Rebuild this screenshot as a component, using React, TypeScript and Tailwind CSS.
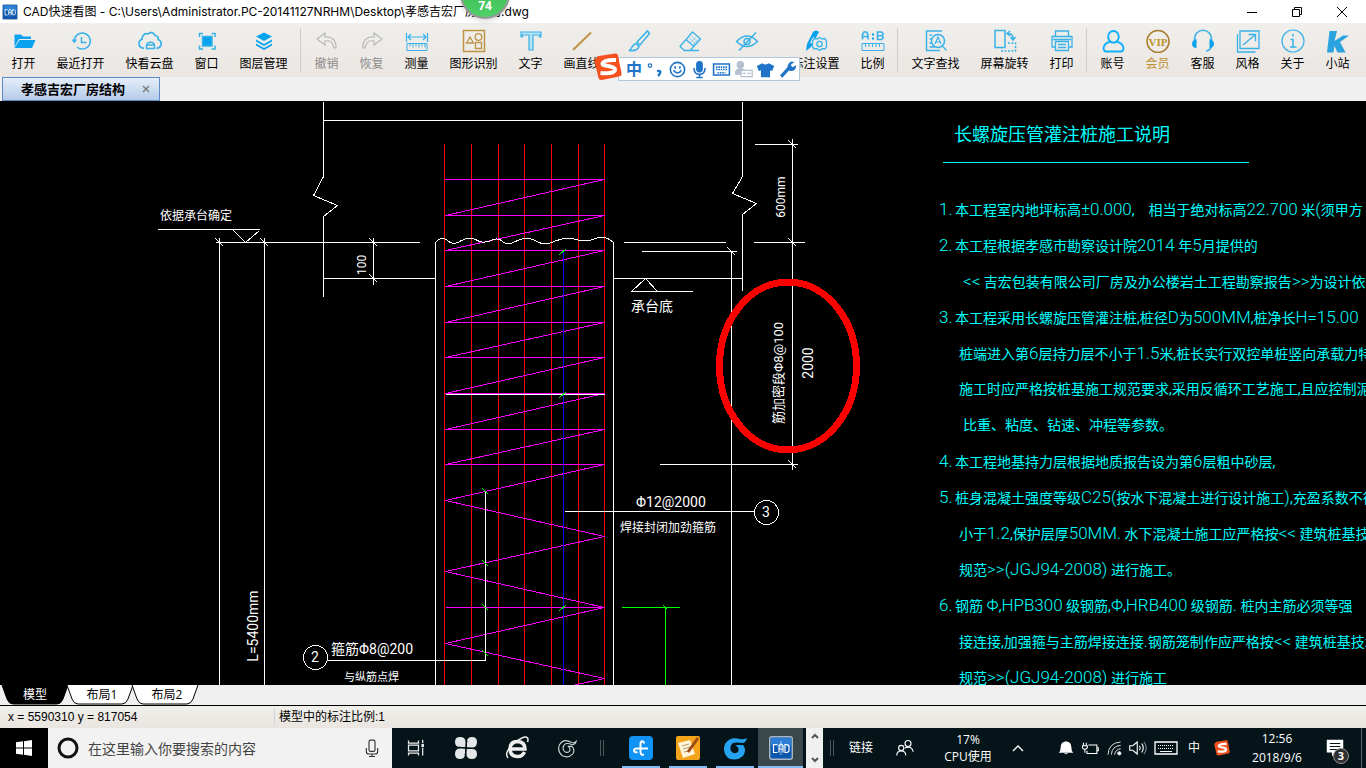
import type { ReactNode } from 'react';
import clsx from 'clsx';

const BLUE = '#0aa2ee';
const SKY = '#38b2e8';
const GOLD = '#bd9544';
const GRAY = '#b9b9b9';

type IconProps = { color?: string; children: ReactNode; className?: string };

function Icon({ color = SKY, children, className = 'size-6' }: IconProps) {
    return (
        <svg viewBox="0 0 24 24" fill="none" stroke={color} strokeWidth="1.5" className={className} aria-hidden="true">
            {children}
        </svg>
    );
}

function CadLogo({ className }: { className: string }) {
    return (
        <svg viewBox="0 0 24 24" fill="none" className={className} aria-hidden="true">
            <rect x="0.7" y="0.7" width="22.6" height="22.6" rx="2" fill="#0d57ae" stroke="#a9b6c4" strokeWidth="1.4" />
            <path d="M2 2h20v8Q12 13 2 9z" fill="#2b7ed4" />
            <path d="M8.5 8.5h-4v8h4M10 16.500v-7l2-1.500 2 1.500v7M10 13h4M16 8.500v8h2.500l1.500-1.500v-5l-1.500-1.500z" stroke="#fff" strokeWidth="1.200" />
            <path d="M12 5v14" stroke="#cfe4ff" strokeWidth="0.700" />
        </svg>
    );
}

function SogouLogo({ className }: { className: string }) {
    return (
        <svg viewBox="0 0 28 28" fill="none" className={className} aria-hidden="true">
            <path d="M3 5Q2 3 5 3L21 0.500Q23.500 0 24 2.500L27.500 20Q28 23 25 23.500L8 27Q5 27.500 4.500 25L0.500 8Q0 6 3 5z" fill="#f4511e" />
            <path d="M22 7Q10 6.500 8.500 10.500C8 14 21.500 12 21 17C20.500 20.500 12 20.500 6.500 20" stroke="#fff" strokeWidth="4" />
        </svg>
    );
}

const toolGroups = [
    [
        {
            label: '打开', width: 'w-[45px]',
            icon: <Icon color={BLUE}><path d="M2.500 18V5.500h6.500l2 2h8V10H7z" fill={BLUE} stroke="none" /><path d="M7.500 11H23.500l-3.500 8H2.500z" fill={BLUE} stroke="none" /></Icon>,
        },
        {
            label: '最近打开', width: 'w-[69px]',
            icon: <Icon><path d="M5.300 12a8 8 0 1 1 2.700 6" /><path d="M2.500 10.500h5.600l-2.800 4z" fill={SKY} stroke="none" /><path d="M12.500 8v5.500h5" /></Icon>,
        },
        {
            label: '快看云盘', width: 'w-[69px]',
            icon: <Icon><path d="M6 19.300C2.500 19 1 17 1 14.500c0-2 1-3.500 3-4.200C4 6 7 4 10 5c2-2.500 6-1.500 7 1.500 2.500 0 3.500 2 3.200 4 2.300.8 3 2.500 3 4 0 3-2 4.500-4.700 4.800" strokeWidth="1.700" /><path d="M8.500 19.500v-2.500c0-5 8-5 8 0v2.500zM9 16h7" /></Icon>,
        },
        {
            label: '窗口', width: 'w-[45px]',
            icon: <Icon><path d="M7.500 7.500h9.500v9.500H7.500z" fill={BLUE} /><path d="M4.500 8V4.500H8M16.500 4.500H20V8M20 16.500V20h-3.500M8 20H4.500v-3.500" /></Icon>,
        },
        {
            label: '图层管理', width: 'w-[69px]',
            icon: <Icon><path d="M12 3.500l8 4-8 4.500-8-4.500zM4 10.500l8 4.500 8-4.500v2l-8 4.500-8-4.500zM4 14.500l8 4.500 8-4.500v2L12 21l-8-4.500z" fill={BLUE} stroke="none" /></Icon>,
        },
    ],
    [
        {
            label: '撤销', width: 'w-[45px]', muted: true,
            icon: <Icon color={GRAY}><path d="M10 4L2 10l8 6v-4c5-1 8 1 9 7h2C21.500 11 17 7.500 10 8z" strokeWidth="1.200" /></Icon>,
        },
        {
            label: '恢复', width: 'w-[45px]', muted: true,
            icon: <Icon color={GRAY}><path d="M14 4l8 6-8 6v-4c-5-1-8 1-9 7H3C2.500 11 7 7.500 14 8z" strokeWidth="1.200" /></Icon>,
        },
        {
            label: '测量', width: 'w-[45px]',
            icon: <Icon><path d="M1.500 4v9M22.500 4v9M3 8h18M6 5L3 8l3 3M18 5l3 3-3 3" strokeWidth="1.200" /><path d="M2 14.500h20v7H2zM5 14.500v3M8 14.500v4M11 14.500v3M14 14.500v4M17 14.500v3M20 14.500v4" strokeWidth="1" /></Icon>,
        },
        {
            label: '图形识别', width: 'w-[69px]',
            icon: <Icon color={GOLD}><path d="M1.500 1.500h21v21h-21z" /><path d="M8 8l3.500 6h-7zM13.500 13.500h6v6h-6z" strokeWidth="1.300" /><circle cx="16.500" cy="8" r="3.300" strokeWidth="1.300" /></Icon>,
        },
        {
            label: '文字', width: 'w-[45px]',
            icon: <Icon><path d="M2 3h20v5h-1.500V6H14v15h-4V6H3.500v2H2z" strokeWidth="1.200" fill="#b8e2f5" /></Icon>,
        },
        { label: '画直线', width: 'w-[57px]', icon: <Icon color={GOLD}><path d="M3 21L21 3.500" strokeWidth="2" /></Icon> },
        {
            label: '涂鸦线', width: 'w-[57px]', unlabelled: true,
            icon: <Icon><path d="M20.500 2l2 2.500L13 16l-3-3zM9 14.500l3 3c-1 3.500-5 4.500-10 4 3-1 3-6.500 7-7z" /></Icon>,
        },
        {
            label: '删除', width: 'w-[45px]', unlabelled: true,
            icon: <Icon><path d="M14.500 3l8 7L12 21.500H6.500L2 17.500zM8 10.500l8 7M6 21.500h15" strokeWidth="1.300" /><path d="M11 8.500l7 7M13 6.500l7 7M18 8l-6 6M20 10l-5 6" strokeWidth="0.500" /></Icon>,
        },
        {
            label: '隐藏标注', width: 'w-[69px]', unlabelled: true,
            icon: <Icon><path d="M1.500 12.500Q12 1.500 22.500 12.500Q12 22.500 1.500 12.500z" /><circle cx="12" cy="12.500" r="3" /><path d="M21 3.500L4 21.500" /></Icon>,
        },
        {
            label: '标注设置', width: 'w-[69px]',
            icon: <Icon><path d="M9 3q3-3 6 0L7 18l-5 4 1-7z" fill={BLUE} stroke="none" /><path d="M9 8l4 2-3 5-4-1z" fill="#eeecea" stroke="none" /><path d="M15.500 8.500l2.500 1.500 3-.5 1.500 3v5l-1.500 2.500-3-.3-2.500 1.800-2.500-1.800-3 .3L8.500 17.500v-5l1.500-3 3 .5z" strokeWidth="1.300" fill="#eeecea" /><circle cx="15.500" cy="15" r="2.700" strokeWidth="1.300" /></Icon>,
        },
        {
            label: '比例', width: 'w-[45px]',
            icon: <Icon><path d="M1.500 10.500V5.500L3 3h2.500L7 5.500v5M1.500 7.500H7M16.500 3v7.500h4l1.500-1.500V7.500l-1-1 1-1V4.500L20.500 3zM16.500 6.700H21" strokeWidth="1.600" /><path d="M11 4.500h2v2h-2zM11 8.500h2v2h-2z" fill={BLUE} stroke="none" /><path d="M1 14.500h22v7H1zM4.500 14.500v3.500M8 14.500v3.500M11.500 14.500v3.500M15 14.500v3.500M18.500 14.500v3.500" strokeWidth="1" /></Icon>,
        },
    ],
    [
        {
            label: '文字查找', width: 'w-[69px]',
            icon: <Icon><path d="M16 21.500H2.500V2H18M5.500 6H8M5.500 10h2M5.500 14h2M5.500 18h5" /><circle cx="14" cy="12" r="6.500" /><path d="M11 15l3-7 3 7M12 13h4M18.500 17l4 4.500" strokeWidth="1.200" /></Icon>,
        },
        {
            label: '屏幕旋转', width: 'w-[69px]',
            icon: <Icon><path d="M2 1.500h10v17H2z" /><path d="M15 14h7.500v8H9v-3" strokeDasharray="2 1.500" /><path d="M15 4.500q5 0 5 5M17 2l-3 2.500L17 7M17.500 8l2.500 3 2.500-3" /></Icon>,
        },
        {
            label: '打印', width: 'w-[45px]',
            icon: <Icon><path d="M5.500 7V2h13v5M5 18H2V7.500h20V18h-3M5.500 12.500h13v9h-13zM8 15.500h8M8 18.500h8M3 10.500h18" strokeWidth="1.300" /></Icon>,
        },
    ],
    [
        {
            label: '账号', width: 'w-[45px]',
            icon: <Icon color="#12b0fa"><path d="M12.500 2a5.300 5.800 0 1 1-.1 0zM9.500 12.500C1.500 14.500 1 22 5 22.500H20c4-.5 3.500-8-4.500-10" strokeWidth="1.900" /></Icon>,
        },
        {
            label: '会员', width: 'w-[45px]', gold: true,
            icon: (
                <Icon color="#a87c2c">
                    <circle cx="12" cy="12.500" r="11" />
                    <text x="12" y="16.500" textAnchor="middle" fontFamily="Liberation Serif, serif" fontWeight="700" fontSize="11" fill="#c09228" stroke="none">VIP</text>
                </Icon>
            ),
        },
        {
            label: '客服', width: 'w-[45px]',
            icon: <Icon><path d="M3.500 11C3 -2 21 -2 20.500 11M20.500 17q-1 4.500-5.500 5" /><path d="M5.500 10v9C-.5 19-.5 11 5.500 10zM18.500 10v9C24.500 19 24.500 11 18.500 10z" fill={BLUE} stroke="none" /></Icon>,
        },
        {
            label: '风格', width: 'w-[45px]',
            icon: <Icon><path d="M4 2h19v17.500H4zM1.500 5v18h18M7 16L19.500 5.500M12.500 5.500h7v7" strokeWidth="1.300" /></Icon>,
        },
        {
            label: '关于', width: 'w-[45px]',
            icon: <Icon><circle cx="12" cy="12" r="11" strokeWidth="1.200" /><path d="M12 5v2.500M9.500 10.500H12V18M9 18h6.500" /></Icon>,
        },
        {
            label: '小站', width: 'w-[45px]',
            icon: <Icon><path d="M3.500 2H11L8.500 12 17 6.500h6L14 13l5.500 10.500h-8L8.500 17 7.500 23.500H1z" fill="#2aa3df" stroke="none" /></Icon>,
        },
    ],
];

function TitleBar() {
    return (
        <header className="flex h-[23px] items-center bg-white">
            <CadLogo className="ml-[2px] size-4" />
            <h1 className="ml-[5px] font-['Inter','Noto_Sans_CJK_SC',sans-serif] text-[12px] whitespace-nowrap text-black">
                CAD快速看图 - C:\Users\Administrator.PC-20141127NRHM\Desktop\孝感吉宏厂房结构.dwg
            </h1>
            <div className="mr-[2px] ml-auto flex">
                <button aria-label="最小化" className="flex h-5 w-[45px] items-center justify-center">
                    <svg className="size-3" stroke="#000"><path d="M1 6.500h10" /></svg>
                </button>
                <button aria-label="还原" className="flex h-5 w-[45px] items-center justify-center">
                    <svg className="size-3" stroke="#000" fill="none"><path d="M1.500 3.500h7v7h-7zM3.500 3.500v-2h7v7h-2" /></svg>
                </button>
                <button aria-label="关闭" className="flex h-5 w-[45px] items-center justify-center">
                    <svg className="size-3" stroke="#000"><path d="M1 1l10 10M11 1L1 11" /></svg>
                </button>
            </div>
        </header>
    );
}

function Toolbar() {
    return (
        <nav className="flex h-[54px] bg-linear-to-b from-[#f0efec] to-[#ebe6e2] pl-px">
            {toolGroups.map((group, index) => (
                <div key={index} className="flex">
                    {index > 0 && <div className="mt-[5px] mr-[3px] ml-[2px] h-11 w-px bg-[#cfcdca]" />}
                    {group.map((tool: any) => (
                        <button
                            key={tool.label}
                            aria-label={tool.unlabelled ? tool.label : undefined}
                            className={clsx(
                                'flex flex-col items-center pt-[6px] text-[12px] leading-4 whitespace-nowrap',
                                tool.width,
                                tool.muted ? 'text-[#8c8c8c]' : tool.gold ? 'text-[#bd8f2e]' : 'text-black',
                            )}
                        >
                            {tool.icon}
                            {!tool.unlabelled && <span className="mt-[3px]">{tool.label}</span>}
                        </button>
                    ))}
                </div>
            ))}
        </nav>
    );
}

function ImeBar() {
    return (
        <div className="absolute top-[57px] left-[618px] flex h-6 w-[182px] items-center border border-[#b4c7da] bg-white text-[#1f74c8]">
            <SogouLogo className="-mt-1 -ml-[25px] size-7 shrink-0" />
            <button className="ml-[3px] w-[18px] text-[16px] leading-5 font-bold">中</button>
            <div className="ml-[3px] flex gap-[3px]">
                <Icon color="#1f74c8" className="size-[19px]"><circle cx="5" cy="7" r="2.200" /><path d="M14 14q5-1 4 2-1 3-3 4" strokeWidth="3" /></Icon>
                <Icon color="#1f74c8" className="size-[19px]"><circle cx="12" cy="12" r="9" strokeWidth="2" /><path d="M7 13q5 7 10 0M9 8v3M15 8v3" strokeWidth="2" /></Icon>
                <Icon color="#1f74c8" className="size-[19px]"><rect x="8.500" y="2" width="7" height="13" rx="3.500" fill="#1f74c8" /><path d="M5 10q0 8 7 8t7-8M12 18v4M8 22h8" strokeWidth="2" /></Icon>
                <Icon color="#1f74c8" className="size-[19px]"><path d="M2 5h20v14H2z" strokeWidth="2" /><path d="M5 9h14M5 12h14M7 16h10" strokeWidth="2" strokeDasharray="2 1" /></Icon>
                <Icon color="#b5bfd0" className="size-[19px]"><circle cx="8" cy="6" r="4" fill="#b5bfd0" /><path d="M2 18q0-7 6-7t6 7z" fill="#b5bfd0" /><path d="M9 13h14v8H9z" fill="#fff" /><path d="M11 17h4M17 17h4" /></Icon>
                <Icon color="#1f74c8" className="size-[19px]"><path d="M8 5q4 3 8 0l6 3-2 5-3-1v9H7v-9l-3 1-2-5z" fill="#1f74c8" /></Icon>
                <Icon color="#1f74c8" className="size-[19px]"><path d="M4 21l10-11" strokeWidth="4" /><path d="M19 3l-4 3 3 4 4-2q-1 6-7 5-5-5 1-10z" fill="#1f74c8" /></Icon>
            </div>
        </div>
    );
}

const barRows = [179, 215, 250, 286, 322, 357, 393, 429, 464];
const zigzag = [464, 500, 536, 571, 607, 643, 678];
const dimTicks = [[219, 242], [264, 242], [373, 242], [373, 278], [731, 251], [792, 144], [792, 242], [792, 464]];
const weldTicks = [[563, 251], [563, 394], [563, 607]];
const stirrupTicks = [[485, 491], [485, 563], [485, 607], [485, 653]];

function PileDrawing() {
    return (
        <svg className="absolute inset-0 size-full" fill="none" shapeRendering="crispEdges">
            <g transform="translate(0 -101)" strokeWidth="1">
                <g stroke="#fff" transform="translate(0.5 0.5)">
                    <path d="M323 101V176L313 195 337 205 323 216V296" />
                    <path d="M742 101V176L732 193 756 203 742 214V290" />
                    <path d="M323 120H742M157 229H259M233 230L245 242 259 230M215 242H419M323 278H435" />
                    <path d="M219 237V685M264 237V685M373 237V284" />
                    <path d="M623 242H725M641 251H736M613 278H742M731 251V685" />
                    <path d="M631 291L645 278 657 291M631 291H692" />
                    <path d="M792 138V469M754 144H797M753 242H804M659 464H797" />
                    {dimTicks.map(([x, y]) => <path key={`${x}-${y}`} d={`M${x - 4} ${y - 4}L${x + 4} ${y + 4}`} />)}
                </g>
                <path d="M444.500 144V685M471.500 144V685M498.500 144V685M524.500 144V685M551.500 144V685M578.500 144V685M604.500 144V685" stroke="#f00" />
                <g stroke="#f0f" transform="translate(0.5 0.5)">
                    {barRows.map((y) => <path key={y} d={`M444 ${y}H604`} />)}
                    {barRows.slice(1).map((y, i) => <path key={y} d={`M604 ${barRows[i]}L445 ${y}`} />)}
                    <path d={`M${zigzag.map((y, i) => `${i % 2 ? 445 : 604} ${y}`).join('L')}L572 685`} />
                    <path d="M445 607H604" />
                </g>
                <g stroke="#fff" transform="translate(0.5 0.5)">
                    <path d="M435 685V242Q441 235 447 240Q453 246 461 240Q470 235 479 241Q486 243 493 239Q499 237 503 242Q509 245 517 240Q528 235 538 242Q547 245 556 240Q568 236 579 240Q589 241 595 238Q604 234 613 242V685" />
                    <path d="M445 394H604M485 490V660H327M564 511H754" />
                    <circle cx="766" cy="512" r="12" />
                    <circle cx="315" cy="657" r="12" />
                </g>
                <path d="M563.500 251V685" stroke="#00f" />
                <g stroke="#0f0" transform="translate(0.5 0.5)">
                    {weldTicks.map(([x, y]) => <path key={y} d={`M${x - 4} ${y + 3}L${x + 3} ${y - 3}`} />)}
                    {stirrupTicks.map(([x, y]) => <path key={y} d={`M${x - 3} ${y - 3}L${x + 3} ${y + 3}`} />)}
                    <path d="M621 607H679M665 607V685M663 605L667 609" />
                </g>
                <g fill="#fff" fontSize="14">
                    <text x="160" y="220" fontSize="12">依据承台确定</text>
                    <text x="631" y="311">承台底</text>
                    <text x="636" y="507">Φ12@2000</text>
                    <text x="620" y="532" fontSize="12">焊接封闭加劲箍筋</text>
                    <text x="331" y="654">箍筋Φ8@200</text>
                    <text x="344" y="681" fontSize="11">与纵筋点焊</text>
                    <text x="762" y="517">3</text>
                    <text x="311" y="662">2</text>
                    <g textAnchor="middle">
                        <text transform="translate(366 265) rotate(-90)" fontSize="12">100</text>
                        <text transform="translate(258 626) rotate(-90)">L=5400mm</text>
                        <text transform="translate(785 197) rotate(-90)" fontSize="12">600mm</text>
                        <text transform="translate(783 373) rotate(-90)" fontSize="13">筋加密段Φ8@100</text>
                        <text transform="translate(813 363) rotate(-90)">2000</text>
                    </g>
                </g>
                <ellipse cx="788" cy="366" rx="68.500" ry="84" stroke="#f00" strokeWidth="7" />
            </g>
        </svg>
    );
}

const notes = [
    { no: '1.', text: '本工程室内地坪标高±0.000,\u3000相当于绝对标高22.700 米(须甲方' },
    { no: '2.', text: '本工程根据孝感市勘察设计院2014 年5月提供的' },
    { text: '<< 吉宏包装有限公司厂房及办公楼岩土工程勘察报告>>为设计依', indent: 'pl-2' },
    { no: '3.', text: '本工程采用长螺旋压管灌注桩,桩径D为500MM,桩净长H=15.00' },
    { text: '桩端进入第6层持力层不小于1.5米,桩长实行双控单桩竖向承载力特', indent: 'pl-1' },
    { text: '施工时应严格按桩基施工规范要求,采用反循环工艺施工,且应控制泥', indent: 'pl-1' },
    { text: '比重、粘度、钻速、冲程等参数。', indent: 'pl-2' },
    { no: '4.', text: '本工程地基持力层根据地质报告设为第6层粗中砂层,' },
    { no: '5.', text: '桩身混凝土强度等级C25(按水下混凝土进行设计施工),充盈系数不得' },
    { text: '小于1.2,保护层厚50MM. 水下混凝土施工应严格按<< 建筑桩基技', indent: 'pl-1' },
    { text: '规范>>(JGJ94-2008) 进行施工。', indent: 'pl-1' },
    { no: '6.', text: '钢筋 Φ,HPB300 级钢筋,Φ,HRB400 级钢筋. 桩内主筋必须等强' },
    { text: '接连接,加强箍与主筋焊接连接.钢筋笼制作应严格按<< 建筑桩基技术', indent: 'pl-1' },
    { text: '规范>>(JGJ94-2008) 进行施工', indent: 'pl-1' },
];

// latin runs use a taller face than the hanzi around them
function NoteText({ text }: { text: string }) {
    return text.split(/([A-Z0-9.Φ±=()<>-]+)/).map((part, i) => (
        i % 2 ? <span key={i} className="text-[17px] font-light">{part}</span> : part
    ));
}

function ConstructionNotes() {
    return (
        <section className="absolute top-[16px] left-[939px] whitespace-nowrap text-[#00ffff]">
            <h2 className="ml-[15px] h-9 text-[18px] leading-9">长螺旋压管灌注桩施工说明</h2>
            <div className="mt-[9px] ml-1 h-px w-[306px] bg-[#00ffff]" />
            <ol className="mt-[28px] text-[14px]">
                {notes.map((note, i) => (
                    <li key={i} className="flex h-9 items-center leading-9">
                        <span className="w-4 shrink-0 text-[17px] font-light">{note.no}</span>
                        <span className={note.indent}><NoteText text={note.text} /></span>
                    </li>
                ))}
            </ol>
        </section>
    );
}

const layoutTabs = ['模型', '布局1', '布局2'];

function LayoutTabs() {
    return (
        <div className="flex h-[21px] border-b border-black bg-[#f0f0f0]">
            {layoutTabs.map((name, i) => (
                <button key={name} className={clsx('relative h-5 w-[68px] text-[12px]', i === 0 ? 'ml-px text-white' : '-ml-[3px] pl-1 text-black')}>
                    <svg className="absolute inset-0 size-full" aria-hidden="true">
                        <path d="M1 0L6 14Q8 19 12 19H56Q60 19 62 14L67 0" fill={i === 0 ? '#000' : '#fff'} stroke="#000" />
                    </svg>
                    <span className="relative">{name}</span>
                </button>
            ))}
        </div>
    );
}

const pinned = [
    {
        name: '任务视图', width: 'w-12',
        icon: <Icon color="#eee" className="size-5"><path d="M3 3v3h12V3M3 21v-3h12v3M3 8.500h12v7H3zM20 2v4M20 12v9" /><path d="M18.500 7h3v4h-3z" fill="#eee" stroke="none" /></Icon>,
    },
    {
        name: '搜狗浏览', width: 'w-[51px]',
        icon: (
            <Icon color="none" className="size-6">
                <path d="M11.500 11H6Q1 11 1 6T6 1Q11.500 1 11.500 6zM13 11.500V6Q13 1 18 1T23 6Q23 11.500 18 11.500zM12.500 13H18Q23 13 23 18T18 23Q12.500 23 12.500 18zM11 12.500V18Q11 23 6 23T1 18Q1 12.500 6 12.500z" fill="#e4e7e8" />
                <path d="M5 11Q9 12 12 12Q12 8 13 5M19 12.500Q15 12 12 12Q12 16 11 19" stroke="#041419" strokeWidth="1" />
            </Icon>
        ),
    },
    {
        name: 'Internet Explorer', width: 'w-[52px]',
        icon: <Icon color="#eee" className="size-6"><path d="M19.500 16Q17 21 12 20.500 5 20 5 13 5 5.500 12.500 5.500 20 6 20 13H6" strokeWidth="3.500" /><path d="M3 22Q-2 16 11 6 20-1 22.500 2q1 1.500 0 4" /></Icon>,
    },
    {
        name: '广联达', width: 'w-12',
        icon: (
            <Icon color="#cfd6d8" className="size-5">
                <path d="M23 4Q20 7 17 5Q8 0 3 8Q0 16 6 21Q13 25 19 19Q22 14 18 10H13Q17 12 15 16Q11 19 8 15Q6 10 10 7Q14 6 18 8Q22 8 23 4z" strokeWidth="1.300" />
            </Icon>
        ),
    },
];

const running = [
    {
        name: '快看',
        icon: (
            <Icon color="#fff" className="size-6">
                <rect width="24" height="24" rx="4" fill="#1193f5" stroke="none" />
                <path d="M15 7.500Q14.500 4.500 12.500 5.500Q11.500 6 11.500 8V16Q11.500 19.500 15 18.500M19 12.500H8Q5 12.500 5 14.500Q5.500 17 8.500 16" strokeWidth="2" />
            </Icon>
        ),
    },
    {
        name: '记事本',
        icon: (
            <Icon color="#9d4b17" className="size-6">
                <rect width="24" height="24" rx="2" fill="#f5a31a" stroke="none" />
                <path d="M2 7l12-3 5 14-12 4z" fill="#fff6d9" stroke="none" />
                <path d="M6 10l7-2M7 13l7-2M8 16l5-1" stroke="#b69a6a" strokeWidth="1" />
                <path d="M22 2L12 16" strokeWidth="3" />
            </Icon>
        ),
    },
    {
        name: '广联达服务',
        icon: (
            <Icon color="none" className="size-6">
                <path d="M24 2Q21 4 17 3Q7 0 2 8Q-1 16 5 22Q13 26 20 20Q24 14 20 9H12Q17 12 15 16Q11 19 8 15Q6 10 10 7Q14 6 19 7Q23 7 24 2z" fill="#25a2f2" />
            </Icon>
        ),
    },
];

function GripLines() {
    return <span className="flex h-4 w-[4px] justify-between border-x border-[#4b5759]" />;
}

function Taskbar() {
    return (
        <footer className="flex h-10 items-stretch bg-[#041419] text-[12px] text-white">
            <button aria-label="开始" className="flex w-12 items-center justify-center bg-black">
                <svg viewBox="0 0 16 16" className="size-4" fill="#fff"><path d="M0 2.300L7 1.300V7.500H0zM8 1.200L16 0v7.500H8zM0 8.500h7v6.200L0 13.700zM8 8.500h8V16l-8-1.200z" /></svg>
            </button>
            <label className="flex w-[344px] items-center bg-[#f2f2f2] px-[9px]">
                <svg viewBox="0 0 22 22" className="size-[22px]" fill="none" stroke="#111" strokeWidth="3"><circle cx="11" cy="11" r="9" /></svg>
                <input
                    aria-label="搜索"
                    placeholder="在这里输入你要搜索的内容"
                    className="ml-[9px] min-w-0 flex-1 bg-transparent text-[14px] text-[#333] outline-none placeholder:text-[#444]"
                />
                <Icon color="#333" className="mr-[2px] size-[18px]"><rect x="8" y="1.500" width="8" height="15" rx="2" /><path d="M4.500 12v5q0 3 3 3h9q3 0 3-3v-5M12 20v4M8 23.500h8" /></Icon>
            </label>
            {pinned.map((app) => (
                <button key={app.name} aria-label={app.name} className={clsx('flex items-center justify-center', app.width)}>{app.icon}</button>
            ))}
            <div className="flex w-[26px] items-center pl-[9px]"><GripLines /></div>
            {running.map((app) => (
                <button key={app.name} aria-label={app.name} className="flex w-[47px] flex-col items-center">
                    <span className="flex h-[38px] items-center pt-[2px]">{app.icon}</span>
                    <span className="h-[2px] w-[38px] bg-[#84bdf6]" />
                </button>
            ))}
            <button aria-label="CAD快速看图" className="flex w-[45px] flex-col items-center bg-[#3a474b]">
                <span className="flex h-[38px] items-center pt-[2px]"><CadLogo className="size-6" /></span>
                <span className="h-[2px] w-full bg-[#84bdf6]" />
            </button>
            <div className="ml-[3px] flex w-[17px] flex-col items-center justify-between bg-[#f0f0f0] py-[5px]">
                <svg className="h-[6px] w-2" fill="none" stroke="#555" strokeWidth="2"><path d="M1 5l3-3 3 3" /></svg>
                <svg className="h-[6px] w-2" fill="none" stroke="#555" strokeWidth="2"><path d="M1 1l3 3 3-3" /></svg>
            </div>
            <div className="ml-auto flex items-center">
                <div className="flex w-[18px] justify-center"><GripLines /></div>
                <a href="#links" className="w-10 text-center">链接</a>
                <button aria-label="人脉" className="flex w-12 justify-center">
                    <Icon color="#fff" className="size-[18px]"><circle cx="16" cy="6" r="4" /><circle cx="7" cy="12" r="3.500" /><path d="M1 22q0-6 6-6t6 6M12 12q9-4 11 5" /></Icon>
                </button>
                <div className="w-[78px] text-center leading-[17px]">
                    <p>17%</p>
                    <p>CPU使用</p>
                </div>
                <button aria-label="显示隐藏的图标" className="flex w-[22px] justify-center">
                    <svg className="h-2 w-3" fill="none" stroke="#fff" strokeWidth="1.300"><path d="M1 7l5-5 5 5" /></svg>
                </button>
                <div className="ml-[25px] flex items-center">
                    <span className="flex w-6 justify-center"><Icon color="none" className="size-4"><path d="M12 2q8 1 8 9 0 6 3 8H1q3-2 3-8 0-8 8-9zM9 20h6q-3 3-6 0z" fill="#fff" /></Icon></span>
                    <span className="flex w-6 justify-center"><Icon color="#fff" className="size-[17px]"><path d="M9 7h12v12H7v-4M21 11h2v4h-2M2 4v4M6 4v4M0.500 8h7v3q-3.500 4-7 0zM4 13v5" /></Icon></span>
                    <span className="flex w-6 justify-center"><Icon color="#ddd" className="size-4"><path d="M3 22Q4 4 22 3M8 22Q9 9 22 8M13 22q1-8 9-9" /><circle cx="20" cy="20" r="2.500" fill="#fff" /></Icon></span>
                    <span className="flex w-6 justify-center"><Icon color="#fff" className="size-[18px]"><path d="M1 9h4l6-5v16l-6-5H1zM14 9q2 3 0 6M17 6q4 6 0 12" /><path d="M20 4q6 8 0 16" stroke="#7c8688" /></Icon></span>
                    <span className="flex w-8 justify-center">
                        <svg viewBox="0 0 24 14" className="h-[14px] w-6" fill="none" stroke="#fff"><path d="M1 1h22v12H1z" strokeWidth="1.300" /><path d="M4 4.500h16M4 7.500h16" strokeDasharray="1 1" /><path d="M6 10.500h12" /></svg>
                    </span>
                    <span className="w-6 text-center">中</span>
                    <span className="flex w-8 justify-center"><SogouLogo className="size-4" /></span>
                </div>
                <div className="w-[78px] text-center leading-[19px]">
                    <p>12:56</p>
                    <p>2018/9/6</p>
                </div>
                <button aria-label="通知" className="relative flex h-10 w-[46px] items-center justify-center border-r border-[#5d686b]">
                    <Icon color="none" className="-ml-[8px] size-[18px]"><path d="M1 1h22v17H13l-5 5v-5H1z" fill="#fff" /><path d="M5 6h14M5 10h14M5 14h10" stroke="#041419" /></Icon>
                    <span className="absolute right-[12px] bottom-[4px] size-4 rounded-full border border-[#929292] bg-[#303030] text-[11px] leading-[14px] font-bold">3</span>
                </button>
                <span className="w-1" />
            </div>
        </footer>
    );
}

export default function App() {
    return (
        <div className="relative flex h-screen flex-col overflow-hidden bg-[#f0f0f0] font-['Open_Sans','Noto_Sans_CJK_SC',sans-serif]">
            <TitleBar />
            <div className="absolute -top-[31px] left-[460px] flex h-[50px] w-[50px] items-end justify-center rounded-full border-2 border-[#999] bg-linear-to-b from-[#35b24a] to-[#4fd068] pb-[5px] text-[12px] leading-[12px] font-bold text-white shadow-md">
                74
            </div>
            <Toolbar />
            <ImeBar />
            <div className="flex h-6 pl-[2px]">
                <div className="flex w-[158px] items-center border border-[#5c88c4] bg-linear-to-b from-[#e6eefa] to-[#b4cbe8] pl-[18px]">
                    <button className="text-[13px] leading-5 font-bold text-black">孝感吉宏厂房结构</button>
                    <button aria-label="关闭标签" className="ml-[17px]">
                        <svg className="size-2" stroke="#777" strokeWidth="1.300"><path d="M1 1l6 6M7 1L1 7" /></svg>
                    </button>
                </div>
            </div>
            <main className="relative min-h-0 flex-1 overflow-hidden bg-black font-['Roboto','Noto_Sans_CJK_SC',sans-serif]">
                <PileDrawing />
                <ConstructionNotes />
            </main>
            <LayoutTabs />
            <div className="flex h-[22px] items-center bg-linear-to-b from-[#f0efea] to-[#eae5e0] font-['Liberation_Sans','Noto_Sans_CJK_SC',sans-serif] text-[12px] text-black">
                <span className="w-[274px] pl-2">x = 5590310 y = 817054</span>
                <span className="border-l border-[#d2d6da] pl-1">模型中的标注比例:1</span>
            </div>
            <Taskbar />
        </div>
    );
}
